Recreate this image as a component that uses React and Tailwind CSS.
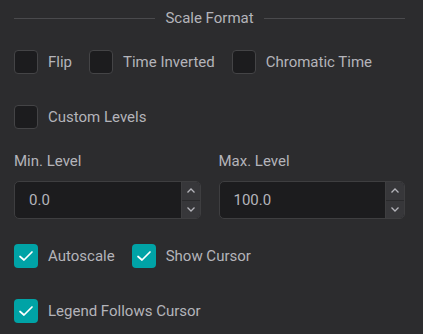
import React from "react";

function Box({ checked }) {
  return checked ? (
    <div className="w-6 h-6 rounded-[4px] bg-[#00a3a6] flex items-center justify-center shrink-0">
      <svg width="18" height="18" viewBox="0 0 18 18" fill="none">
        <path d="M3 9.5 L7 13 L15 5" stroke="#ffffff" strokeWidth="1.7" strokeLinecap="round" strokeLinejoin="round" />
      </svg>
    </div>
  ) : (
    <div className="w-6 h-6 rounded-[4px] bg-[#1c1c1e] border border-[#444446] shrink-0" />
  );
}

function Check({ label, checked }) {
  return (
    <div className="flex items-center gap-[10px] h-6">
      <Box checked={checked} />
      <span className="text-[15px] text-[#b4b4ba] leading-none">{label}</span>
    </div>
  );
}

function NumInput({ label, value }) {
  return (
    <div className="flex flex-col flex-1">
      <div className="text-[15px] text-[#b4b4ba] leading-[17px] h-[17px]">{label}</div>
      <div className="mt-[11px] h-[38px] flex rounded-[5px] border border-[#3e3e40] bg-[#1c1c1e] overflow-hidden">
        <div className="flex-1 flex items-center pl-[14px] text-[15px] text-[#b4b4ba]">{value}</div>
        <div className="w-[19px] flex flex-col bg-[#37373a] border-l border-[#3e3e40]">
          <div className="flex-1 flex items-center justify-center border-b border-[#2a2a2c]">
            <svg width="10" height="8" viewBox="0 0 10 8" fill="none">
              <path d="M1.5 5.5 L5 2 L8.5 5.5" stroke="#b4b4ba" strokeWidth="1.3" />
            </svg>
          </div>
          <div className="flex-1 flex items-center justify-center">
            <svg width="10" height="8" viewBox="0 0 10 8" fill="none">
              <path d="M1.5 2.5 L5 6 L8.5 2.5" stroke="#b4b4ba" strokeWidth="1.3" />
            </svg>
          </div>
        </div>
      </div>
    </div>
  );
}

export default function App() {
  return (
    <div className="w-[423px] h-[334px] bg-[#2c2c2e] pl-[14px] pr-[18px] pt-[9px] overflow-hidden" style={{ fontFamily: "Roboto, sans-serif" }}>
      <div className="flex items-center h-[18px] gap-[10px]">
        <div className="flex-1 h-[1px] bg-[#4a4a4d]" />
        <span className="text-[15px] text-[#b4b4ba] leading-none">Scale Format</span>
        <div className="flex-1 h-[1px] bg-[#4a4a4d]" />
      </div>
      <div className="flex items-center gap-[17px] mt-[23px]">
        <Check label="Flip" />
        <Check label="Time Inverted" />
        <Check label="Chromatic Time" />
      </div>
      <div className="mt-[31px]">
        <Check label="Custom Levels" />
      </div>
      <div className="flex gap-[18px] mt-[24px]">
        <NumInput label="Min. Level" value="0.0" />
        <NumInput label="Max. Level" value="100.0" />
      </div>
      <div className="flex items-center gap-[17px] mt-[25px]">
        <Check label="Autoscale" checked />
        <Check label="Show Cursor" checked />
      </div>
      <div className="mt-[31px]">
        <Check label="Legend Follows Cursor" checked />
      </div>
    </div>
  );
}
